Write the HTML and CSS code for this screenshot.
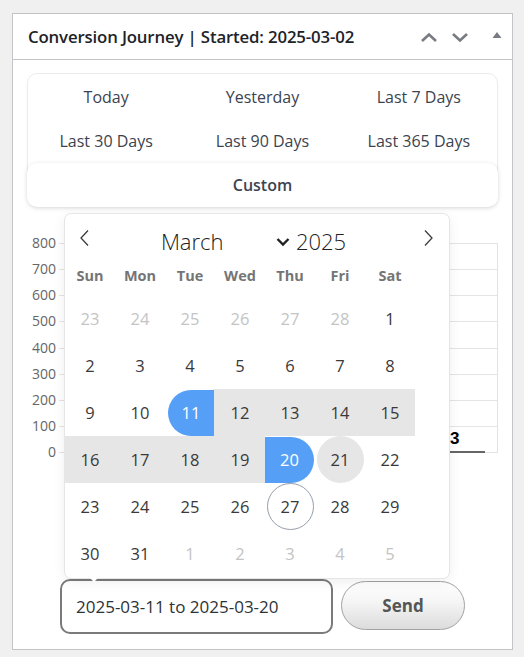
FILE: index.html
```html
<!DOCTYPE html>
<html>
<head>
<meta charset="utf-8">
<link rel="stylesheet" href="styles.css">
</head>
<body>
<div class="panel">
  <div class="panel-head">
    <h2 class="title">Conversion Journey | Started: 2025-03-02</h2>
    <div class="head-actions">
      <svg class="hicon" width="18" height="12" viewBox="0 0 18 12"><polyline points="2,10 9,3.5 16,10" fill="none" stroke="#787c82" stroke-width="2.6"/></svg>
      <svg class="hicon" width="18" height="12" viewBox="0 0 18 12"><polyline points="2,3 9,9.5 16,3" fill="none" stroke="#787c82" stroke-width="2.6"/></svg>
      <svg class="hicon tri" width="10" height="8" viewBox="0 0 10 8"><polygon points="0.5,7 5,1 9.5,7" fill="#787c82"/></svg>
    </div>
  </div>
  <div class="panel-body">
    <div class="ranges">
      <div class="range-grid">
        <div class="range">Today</div>
        <div class="range">Yesterday</div>
        <div class="range">Last 7 Days</div>
        <div class="range">Last 30 Days</div>
        <div class="range">Last 90 Days</div>
        <div class="range">Last 365 Days</div>
      </div>
      <div class="custom">Custom</div>
    </div>

    <div class="chart">
      <div class="ylabels">
        <span>800</span><span>700</span><span>600</span><span>500</span><span>400</span><span>300</span><span>200</span><span>100</span><span>0</span>
      </div>
      <div class="plot">
        <span class="bar-label">3</span>
        <span class="bar-base"></span>
      </div>
    </div>

    <div class="form-row">
      <div class="date-input">2025-03-11 to 2025-03-20</div>
      <button class="send">Send</button>
    </div>

    <div class="calendar">
      <div class="cal-head">
        <svg class="nav" width="14" height="18" viewBox="0 0 14 18"><polyline points="10,1.5 3,9 10,16.5" fill="none" stroke="#3c3c3c" stroke-width="1.3"/></svg>
        <div class="cal-title">
          <span class="month">March<svg class="sel" width="16" height="10" viewBox="0 0 16 10"><polyline points="2.5,2 8,7.5 13.5,2" fill="none" stroke="#222" stroke-width="2.4"/></svg></span>
          <span class="year">2025</span>
        </div>
        <svg class="nav" width="14" height="18" viewBox="0 0 14 18"><polyline points="4,1.5 11,9 4,16.5" fill="none" stroke="#3c3c3c" stroke-width="1.3"/></svg>
      </div>
      <div class="weekdays">
        <span>Sun</span><span>Mon</span><span>Tue</span><span>Wed</span><span>Thu</span><span>Fri</span><span>Sat</span>
      </div>
      <div class="days">
        <span class="day muted">23</span><span class="day muted">24</span><span class="day muted">25</span><span class="day muted">26</span><span class="day muted">27</span><span class="day muted">28</span><span class="day">1</span>
        <span class="day">2</span><span class="day">3</span><span class="day">4</span><span class="day">5</span><span class="day">6</span><span class="day">7</span><span class="day">8</span>
        <span class="day">9</span><span class="day">10</span><span class="day start"><i>11</i></span><span class="day inrange">12</span><span class="day inrange">13</span><span class="day inrange">14</span><span class="day inrange">15</span>
        <span class="day inrange">16</span><span class="day inrange">17</span><span class="day inrange">18</span><span class="day inrange">19</span><span class="day end"><i>20</i></span><span class="day hover"><i>21</i></span><span class="day">22</span>
        <span class="day">23</span><span class="day">24</span><span class="day">25</span><span class="day">26</span><span class="day today"><i>27</i></span><span class="day">28</span><span class="day">29</span>
        <span class="day">30</span><span class="day">31</span><span class="day muted">1</span><span class="day muted">2</span><span class="day muted">3</span><span class="day muted">4</span><span class="day muted">5</span>
      </div>
    </div>
  </div>
</div>
</body>
</html>
```

FILE: styles.css
```css
* { box-sizing: border-box; }
html, body { margin: 0; padding: 0; }
body {
  background: #f0f0f1;
  font-family: "Open Sans", "Noto Sans", sans-serif;
  color: #1d2327;
  width: 524px;
  height: 657px;
  overflow: hidden;
}
.panel {
  margin: 13px 0 0 12px;
  width: 501px;
  height: 637px;
  background: #fff;
  border: 1px solid #c3c4c7;
}
.panel-head {
  height: 46px;
  border-bottom: 1px solid #c3c4c7;
  display: flex;
  align-items: center;
  padding: 0 0 0 15px;
}
.title {
  margin: 0;
  font-size: 16.8px;
  font-weight: 600;
  letter-spacing: -0.15px;
  color: #1d2327;
  flex: 1;
  white-space: nowrap;
}
.head-actions {
  display: flex;
  align-items: center;
  gap: 13px;
  padding-right: 10px;
}
.hicon { display: block; }
.tri { margin-left: 10px; margin-top: -3px; }

.panel-body {
  position: relative;
  padding: 13px 14px 0 14px;
}
.ranges {
  border: 1px solid #ececec;
  border-radius: 10px;
  padding-top: 1px;
  box-shadow: 0 1px 3px rgba(0,0,0,0.04);
}
.range-grid {
  display: grid;
  grid-template-columns: repeat(3, 1fr);
  grid-auto-rows: 44px;
}
.range {
  display: flex;
  align-items: center;
  justify-content: center;
  font-size: 16px;
  color: #3c4350;
}
.custom {
  height: 44px;
  margin: 0 -1px -1px -1px;
  display: flex;
  align-items: center;
  justify-content: center;
  font-size: 16px;
  font-weight: 600;
  color: #3c4350;
  background: #fff;
  border-radius: 10px;
  box-shadow: 0 1px 5px rgba(0,0,0,0.13);
}

.chart {
  display: flex;
  margin-top: 23px;
  height: 243px;
}
.ylabels {
  flex: 0 0 32px;
  margin-top: 5px;
  height: 225px;
  display: flex;
  flex-direction: column;
  justify-content: space-between;
  align-items: flex-end;
  padding-right: 3px;
  font-size: 14px;
  line-height: 16px;
  color: #666;
}
.plot {
  position: relative;
  flex: 0 0 439px;
  margin-top: 13px;
  height: 210px;
  border-right: 1px solid #e2e2e2;
  background: repeating-linear-gradient(to bottom, #e4e4e4 0, #e4e4e4 1px, transparent 1px, transparent 26.125px);
}
.bar-label {
  position: absolute;
  left: 391px;
  top: 186px;
  font-family: "Liberation Sans", Arial, sans-serif;
  font-weight: 700;
  font-size: 17px;
  color: #000;
}
.bar-base {
  position: absolute;
  left: 391px;
  top: 208px;
  width: 35px;
  height: 2px;
  background: #666;
}

.form-row {
  display: flex;
  justify-content: center;
  align-items: flex-start;
  gap: 8px;
  margin-top: 106px;
}
.date-input {
  width: 273px;
  height: 55px;
  border: 2px solid #7a7a7a;
  border-radius: 10px;
  display: flex;
  align-items: center;
  padding-left: 14px;
  font-size: 17px;
  color: #2c3338;
}
.send {
  width: 124px;
  height: 49px;
  border: 1px solid #a2a2a2;
  border-radius: 25px;
  background: linear-gradient(to bottom, #ffffff 0%, #f4f4f4 45%, #dcdcdc 100%);
  font-family: "Open Sans", "Noto Sans", sans-serif;
  font-size: 17px;
  font-weight: 700;
  color: #555;
  margin-top: 2px;
}

.calendar {
  position: absolute;
  left: 52px;
  top: 154px;
  width: 384px;
  height: 364px;
  background: #fff;
  border-radius: 6px;
  box-shadow: 1px 0 0 #e6e6e6, -1px 0 0 #e6e6e6, 0 1px 0 #e6e6e6, 0 -1px 0 #e6e6e6, 0 3px 13px rgba(0,0,0,0.08);
  font-family: "Open Sans", "Noto Sans", sans-serif;
}
.calendar::after {
  content: "";
  position: absolute;
  left: 25px;
  bottom: -4px;
  border-left: 4px solid transparent;
  border-right: 4px solid transparent;
  border-top: 4px solid #fff;
}
.cal-head {
  height: 48px;
  display: flex;
  align-items: center;
  justify-content: space-between;
  padding: 6px 14px 0 13px;
}
.nav { display: block; margin-top: -6px; }
.cal-title {
  display: flex;
  align-items: center;
  font-size: 22px;
  font-weight: 300;
  color: #222;
  margin-left: -6px;
}
.month {
  display: inline-flex;
  align-items: center;
  width: 130px;
  justify-content: space-between;
}
.sel { margin-top: 2px; }
.year { margin-left: 5px; }
.weekdays {
  display: grid;
  grid-template-columns: repeat(7, 50px);
  height: 26px;
  align-items: center;
  font-size: 14.5px;
  font-weight: 700;
  color: #757575;
  text-align: center;
  margin-bottom: 7px;
}
.days {
  display: grid;
  grid-template-columns: repeat(7, 50px);
  grid-auto-rows: 47px;
}
.day {
  display: flex;
  align-items: center;
  justify-content: center;
  font-size: 16.5px;
  color: #393939;
}
.day i { font-style: normal; }
.day.muted { color: #c4c4c4; }
.day.inrange { background: #e6e6e6; }
.day.start {
  background: linear-gradient(to right, transparent 48px, #e6e6e6 48px);
}
.day.start i {
  display: flex;
  align-items: center;
  justify-content: center;
  width: 46px;
  height: 46px;
  margin-left: 2px;
  background: #569ff7;
  color: #fff;
  border-radius: 23px 0 0 23px;
}
.day.end { justify-content: flex-start; }
.day.end i {
  display: flex;
  align-items: center;
  justify-content: center;
  width: 49px;
  height: 46px;
  background: #569ff7;
  color: #fff;
  border-radius: 0 23px 23px 0;
}
.day.hover i {
  display: flex;
  align-items: center;
  justify-content: center;
  width: 47px;
  height: 47px;
  background: #e6e6e6;
  border-radius: 50%;
}
.day.today i {
  display: flex;
  align-items: center;
  justify-content: center;
  width: 47px;
  height: 47px;
  border: 1px solid #959ea9;
  border-radius: 50%;
}
```
